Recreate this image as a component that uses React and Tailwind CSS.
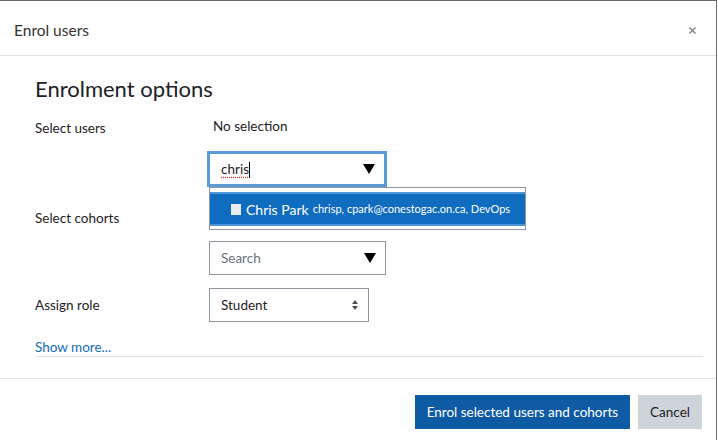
import { X } from 'lucide-react'

function Caret({ className = '' }) {
  return (
    <svg viewBox="0 0 12 10" className={`w-[12px] h-[10px] ${className}`}>
      <path d="M0 0h12L6 10z" fill="#000" />
    </svg>
  )
}

function UpDown() {
  return (
    <svg viewBox="0 0 6 10" className="w-[6px] h-[10px]">
      <path d="M3 0L6 4H0z M0 6h6L3 10z" fill="#495057" />
    </svg>
  )
}

export default function App() {
  return (
    <div className="w-[718px] h-[440px] bg-white overflow-hidden text-[#1d2125]" style={{ fontFamily: 'Lato, "Open Sans", sans-serif' }}>
      <div className="w-[717px] h-[440px] border-t border-r border-[#6b6b6b] flex flex-col">
        {/* Header */}
        <div className="h-[55px] shrink-0 border-b border-[#dee2e6] flex items-center justify-between pl-[14px] pr-[18px] pt-[5px]">
          <h5 className="text-[15.5px] text-[#333]">Enrol users</h5>
          <X className="w-[11px] h-[11px] text-[#777]" strokeWidth={2.5} />
        </div>

        {/* Body */}
        <div className="h-[322px] shrink-0 px-[35px] pt-[18px] pr-[13px]">
          <h3 className="text-[22px] leading-[30px]">Enrolment options</h3>

          <div className="grid grid-cols-[174px_1fr] mt-[12px]">
            {/* users */}
            <label className="text-[13.5px] leading-[20px] pt-[2px]">Select users</label>
            <div>
              <p className="text-[13.5px] leading-[20px] pl-[4px]">No selection</p>
              <div className="relative mt-[15px] -ml-[2px]">
                <div className="w-[180px] h-[36px] border-[3px] border-[#5a9bd8] bg-white flex items-center justify-between pl-[11px] pr-[9px]">
                  <span className="text-[13.5px] text-[#1d2125] underline decoration-dotted decoration-[#e03131] underline-offset-[3px]">chris<span className="inline-block w-px h-[16px] bg-black align-middle" /></span>
                  <Caret />
                </div>
                <div className="absolute left-[2px] top-[36px] w-[317px] h-[43px] border border-[#8f959e] bg-white pt-[4px] z-10">
                  <div className="h-[34px] bg-[#0f6cbf] border-y-2 border-[#4d94d8] flex items-center pl-[21px] text-white whitespace-nowrap">
                    <span className="w-[10px] h-[11px] bg-[#e9ecef] mr-[5px] shrink-0" />
                    <span className="text-[14px]">Chris Park</span>
                    <span className="text-[11px] ml-[4px]">chrisp, cpark@conestogac.on.ca, DevOps</span>
                  </div>
                </div>
              </div>
            </div>

            {/* cohorts */}
            <label className="text-[13.5px] leading-[20px] pt-[2px] mt-[19px]">Select cohorts</label>
            <div className="mt-[19px]">
              <p className="text-[13.5px] leading-[20px] pl-[4px] invisible">No selection</p>
              <div className="mt-[15px] w-[177px] h-[34px] border border-[#8f959e] flex items-center justify-between pl-[11px] pr-[9px]">
                <span className="text-[13.5px] text-[#6a737b]">Search</span>
                <Caret />
              </div>
            </div>

            {/* role */}
            <label className="text-[13.5px] leading-[20px] mt-[13px] self-center">Assign role</label>
            <div className="mt-[13px]">
              <div className="w-[160px] h-[34px] border border-[#8f959e] flex items-center justify-between pl-[11px] pr-[10px]">
                <span className="text-[13.5px]">Student</span>
                <UpDown />
              </div>
            </div>
          </div>

          <div className="mt-[17px] border-b border-[#dee2e6]">
            <a className="text-[13.5px] leading-[17px] text-[#0f6cbf] block">Show more...</a>
          </div>
        </div>

        {/* Footer */}
        <div className="border-t border-[#dee2e6] flex justify-end gap-[8px] pt-[16px] pr-[14px]">
          <button className="h-[34px] px-[12px] bg-[#0f5ba3] text-white text-[13.5px]">Enrol selected users and cohorts</button>
          <button className="h-[34px] px-[12px] bg-[#ced4da] text-[#1d2125] text-[13.5px]">Cancel</button>
        </div>
      </div>
    </div>
  )
}
